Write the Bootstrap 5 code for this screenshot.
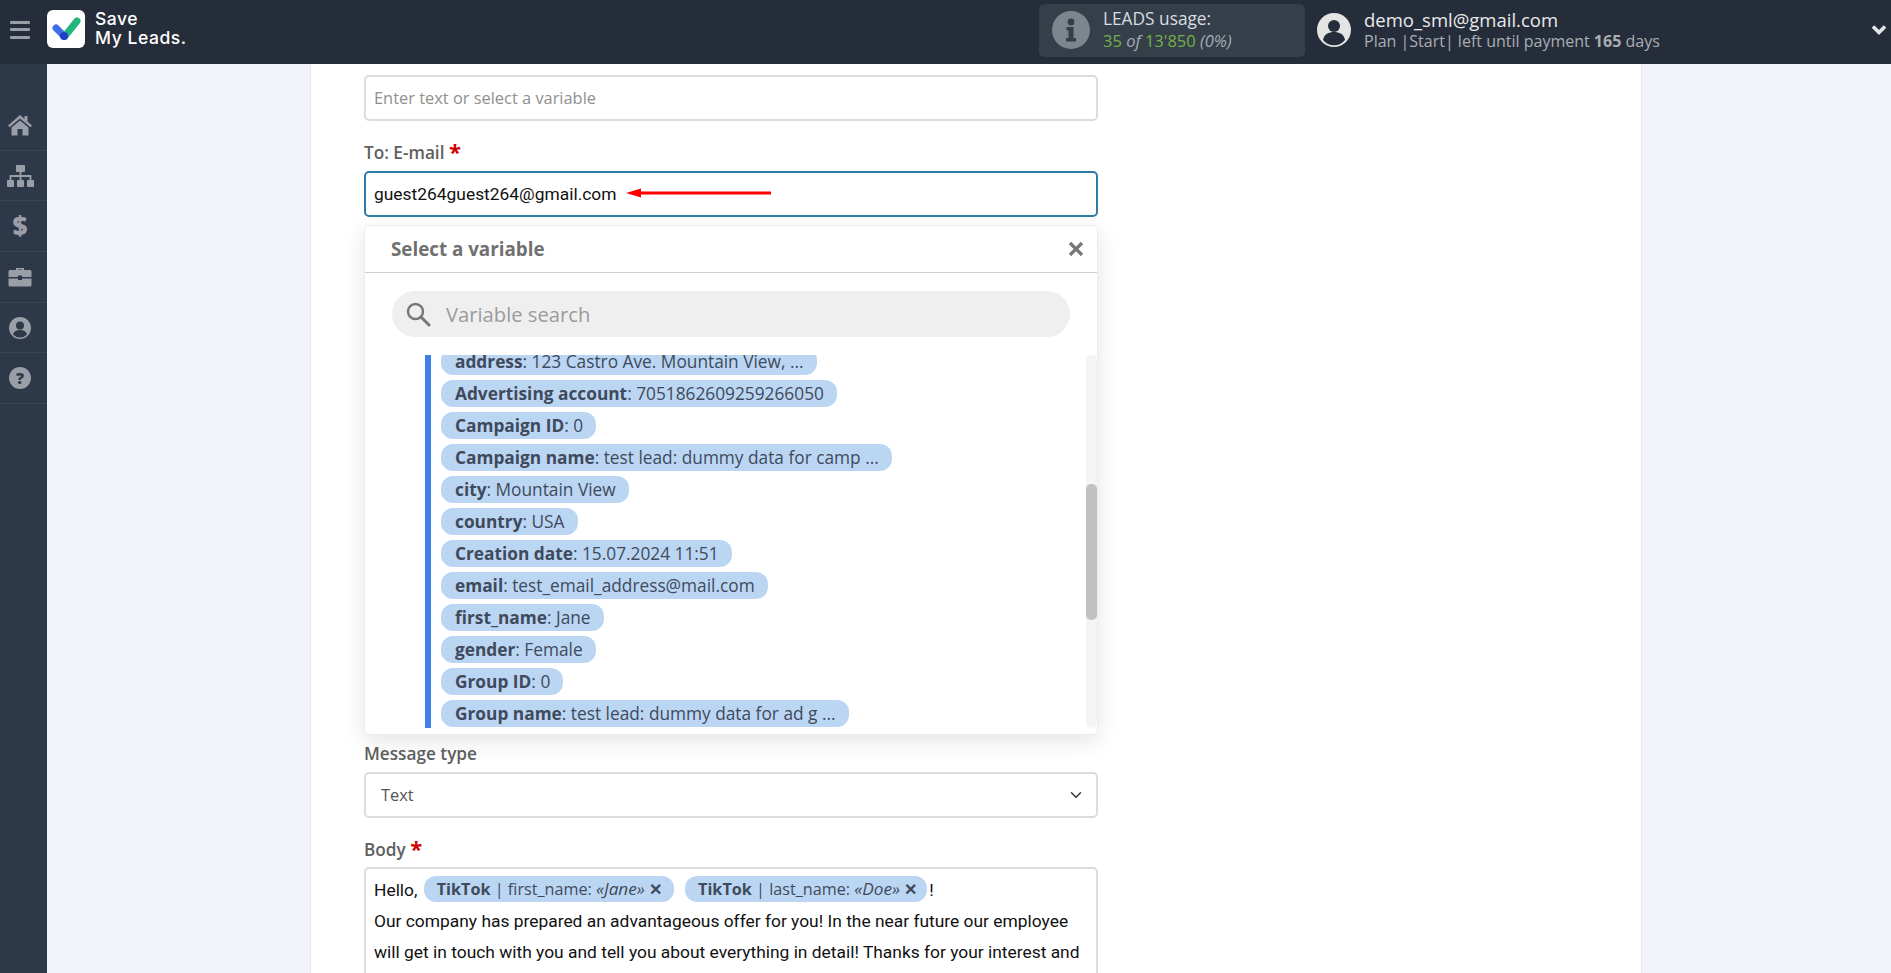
<!DOCTYPE html>
<html lang="en">
<head>
<meta charset="utf-8">
<title>Save My Leads</title>
<link href="https://cdn.jsdelivr.net/npm/bootstrap@5.3.0/dist/css/bootstrap.min.css" rel="stylesheet">
<style>
html,body{height:100%;overflow:hidden}
body{font-family:"Open Sans",sans-serif;background:#f2f4fc;color:#555}
.topbar{height:64px;background:#262d3a;flex:none;padding-bottom:4px}
.burger{width:47px;padding-left:10px;flex:none}
.logo-name{font-family:Inter,sans-serif;font-weight:500;font-size:17.5px;line-height:19.5px;color:#fff;letter-spacing:.55px;margin:0 0 4px 10px}
.logo-box{width:38px;height:38px;background:#fff;border-radius:6px;margin-bottom:3px;flex:none}
.usage{width:266px;height:53px;background:#343f4a;border-radius:5px;color:#d9dce0;font-size:17.300px;line-height:22px;padding-left:13px;flex:none;gap:13px}
.usage-sub{font-size:16.500px}
.usage-green{color:#74b04a}
.usage-muted{color:#a5abb1;font-style:italic}
.user-ico{margin-left:12px;flex:none}
.user-box{width:507px;flex:none;margin-left:13px}
.user-mail{font-size:18.500px;line-height:22px;color:#e9e9e9}
.user-plan{font-size:16px;line-height:20px;color:#a9adb3}
.sidenav{width:47px;background:#2d3848;padding-top:36px;flex:none}
.side-item{height:50.700px;border-bottom:1px solid #3a4656;padding-right:7px}
.panel{margin-left:263px;width:1332px;background:#fff;border-left:1px solid #e8e9f0;border-right:1px solid #e8e9f0;padding:11px 0 0 53px;overflow:hidden}
.form-col{width:734px}
.fld{height:46px;border:2.5px solid #dcdcdc;border-radius:5px;font-size:16.400px;font-family:"Open Sans",sans-serif;color:#555;padding:0 8px 2px;box-shadow:none}
.fld::placeholder{color:#8f8f8f}
.fld-focus,.fld-focus:focus{border-color:#2d7dab;color:#111;font-family:Roboto,sans-serif;font-size:17.400px;box-shadow:none;padding-bottom:0}
.lbl{font-weight:600;font-size:17.200px;line-height:22px;color:#606060;margin:0}
.gap-a{margin-top:21px;margin-bottom:7px}
.gap-b{margin-top:8px;margin-bottom:7px}
.gap-c{margin-top:21px;margin-bottom:6px}
.req{color:#c00;font-size:22px;line-height:16px;font-weight:700;vertical-align:-1px}
.arrow-over{position:absolute;left:262px;top:17px}
.picker{height:510px;margin-top:8px;background:#fff;border:1px solid #ececec;border-radius:5px;box-shadow:0 6px 22px rgba(0,0,0,.11);position:relative}
.picker-head{height:47px;border-bottom:1.5px solid #cfcfcf;padding:0 13px 0 26px}
.picker-title{font-weight:700;font-size:18.800px;color:#707070}
.search-pill{height:46px;margin:18px 27px 0 27px;background:#efefef;border-radius:23px;padding-left:13px;font-size:20.200px;color:#9b9b9b;gap:15px}
.scroll-zone{height:373px;margin:18px 0 0 60px}
.var-list{border-left:6px solid #3d80ea;overflow:hidden;padding-left:10px}
.var-inner{margin-top:-7px}
.var-pill{height:27px;line-height:27px;margin-bottom:5px;padding:0 13px 0 14px;background:#bbd6f3;border-radius:12px;color:#3f4a5c;font-size:17.300px;white-space:nowrap;width:fit-content}
.var-pill b{font-weight:700}
.track{width:11px;background:#f5f5f5;border-radius:5px;flex:none}
.thumb{height:136px;margin-top:129px;background:#c1c1c1;border-radius:5px}
.sel,.sel:focus{height:46px;font-size:16.400px;color:#555;padding-left:15px;padding-bottom:0}
.body-box{height:140px;border:2.5px solid #dcdcdc;border-radius:5px;padding:6px 8px;font-family:Roboto,sans-serif;font-size:17.400px;line-height:31px;color:#111}
.tag{display:inline-block;height:26px;line-height:26px;padding:0 12px 0 13px;margin:0 9px 0 2px;background:#bbd6f3;border-radius:12px;color:#3f4a5c;font-family:"Open Sans",sans-serif;font-size:16.200px;vertical-align:1px}
.tag-last{margin-right:2px;padding-right:10px}
.tag b{font-weight:700}
.tag i{font-size:17.200px}
</style>
</head>
<body class="d-flex flex-column">
<header class="topbar d-flex align-items-center">
  <div class="burger d-flex">
    <svg width="20" height="18" viewBox="0 0 20 18"><g fill="#9a9ea6"><rect y="0" width="20" height="3" rx="1"/><rect y="7" width="20" height="3" rx="1"/><rect y="15" width="20" height="3" rx="1"/></g></svg>
  </div>
  <div class="logo-box d-flex align-items-center justify-content-center">
    <svg width="30" height="24" viewBox="0 0 30 24"><path d="M14 19L26 4" stroke="#23b67c" stroke-width="7" stroke-linecap="round"/><path d="M5 11L13 19" stroke="#3f6fe8" stroke-width="7" stroke-linecap="round"/><circle cx="13" cy="19" r="4" fill="#1f3fc4"/></svg>
  </div>
  <div class="logo-name flex-grow-1">Save<br>My Leads.</div>
  <div class="usage d-flex align-items-center">
    <svg width="38" height="38" viewBox="0 0 38 38"><circle cx="19" cy="19" r="19" fill="#7d858d"/><circle cx="19" cy="11" r="3.4" fill="#343f4a"/><path d="M14.5 16h7v11h2.5v3.5H14V27h2.5v-7.500h-2z" fill="#343f4a"/></svg>
    <div><div>LEADS usage:</div><div class="usage-sub"><span class="usage-green">35</span> <span class="usage-muted">of</span> <span class="usage-green">13'850</span> <span class="usage-muted">(0%)</span></div></div>
  </div>
  <svg width="34" height="34" viewBox="0 0 34 34" class="user-ico"><circle cx="17" cy="17" r="17" fill="#e4e4e4"/><circle cx="17" cy="13" r="6" fill="#262d3a"/><path d="M6 27c1-6 6-8 11-8s10 2 11 8a14 14 0 0 1-22 0z" fill="#262d3a"/></svg>
  <div class="user-box">
    <div class="user-mail">demo_sml@gmail.com</div>
    <div class="user-plan">Plan |Start| left until payment <b>165</b> days</div>
  </div>
  <svg width="16" height="12" viewBox="0 0 16 12" class="me-1"><path d="M2 2.500L8 8.500L14 2.500" fill="none" stroke="#e6e6e6" stroke-width="3.600"/></svg>
</header>
<div class="d-flex flex-grow-1 overflow-hidden">
  <nav class="sidenav">
    <div class="side-item d-flex align-items-center justify-content-center">
      <svg width="26" height="22" viewBox="0 0 26 22"><path d="M13 1L1 11.500l1.500 1.800L13 4.500l10.500 8.800 1.500-1.800L20.500 7.600V2h-3v3zM13 6.500L4.500 13.500V21.500H10.500V15h5v6.500H21.500V13.500z" fill="#9a9fa7"/></svg>
    </div>
    <div class="side-item d-flex align-items-center justify-content-center">
      <svg width="29" height="24" viewBox="0 0 29 24"><g fill="#9a9fa7"><rect x="10" y="1" width="9" height="7" rx="1"/><rect x="1" y="16" width="7" height="7" rx="1"/><rect x="11" y="16" width="7" height="7" rx="1"/><rect x="21" y="16" width="7" height="7" rx="1"/></g><path d="M14.500 8v8M4.500 16v-4h20v4" fill="none" stroke="#9a9fa7" stroke-width="1.800"/></svg>
    </div>
    <div class="side-item d-flex align-items-center justify-content-center">
      <svg width="24" height="36" viewBox="0 0 24 36"><text x="12" y="27" text-anchor="middle" font-family="Open Sans" font-weight="800" font-size="26" fill="#9a9fa7">$</text></svg>
    </div>
    <div class="side-item d-flex align-items-center justify-content-center">
      <svg width="24" height="21" viewBox="0 0 24 21"><path d="M8 4V2h8v2h-2V3.500h-4V4zM2 4h20a1.500 1.500 0 0 1 1.500 1.500V11H14v-1.500h-4V11H.5V5.500A1.500 1.500 0 0 1 2 4zM.5 12.500H10V14h4v-1.500h9.500V19a1.500 1.500 0 0 1-1.500 1.500H2A1.500 1.500 0 0 1 .5 19z" fill="#9a9fa7"/></svg>
    </div>
    <div class="side-item d-flex align-items-center justify-content-center">
      <svg width="22" height="22" viewBox="0 0 22 22"><circle cx="11" cy="11" r="11" fill="#9a9fa7"/><circle cx="11" cy="8.500" r="4" fill="#2d3848"/><path d="M4 17.500c1-3.500 4-4.500 7-4.500s6 1 7 4.500a9.500 9.500 0 0 1-14 0z" fill="#2d3848"/></svg>
    </div>
    <div class="side-item d-flex align-items-center justify-content-center">
      <svg width="22" height="22" viewBox="0 0 22 22"><circle cx="11" cy="11" r="11" fill="#9a9fa7"/><text x="11" y="17" text-anchor="middle" font-family="Open Sans" font-weight="800" font-size="16" fill="#2d3848">?</text></svg>
    </div>
  </nav>
  <main class="panel">
    <div class="form-col">
      <input class="form-control fld" placeholder="Enter text or select a variable">
      <div class="lbl gap-a">To: E-mail <span class="req">*</span></div>
      <div class="position-relative">
        <input class="form-control fld fld-focus" value="guest264guest264@gmail.com">
        <svg class="arrow-over" width="146" height="10" viewBox="0 0 146 10"><path d="M0 5L15 .5V3.500H145V6.500H15V9.500z" fill="#f00"/></svg>
      </div>
      <section class="picker">
        <div class="picker-head d-flex align-items-center justify-content-between">
          <span class="picker-title">Select a variable</span>
          <svg width="16" height="16" viewBox="0 0 16 16"><path d="M2 2L14 14M14 2L2 14" stroke="#777" stroke-width="3.200"/></svg>
        </div>
        <div class="search-pill d-flex align-items-center">
          <svg width="26" height="26" viewBox="0 0 26 26"><circle cx="10.500" cy="10.500" r="7.500" fill="none" stroke="#777" stroke-width="2.400"/><path d="M16 16L24 24" stroke="#777" stroke-width="3" stroke-linecap="round"/></svg>
          <span>Variable search</span>
        </div>
        <div class="scroll-zone d-flex">
          <div class="var-list flex-grow-1">
            <div class="var-inner">
              <div class="var-pill"><b>address</b>: 123 Castro Ave. Mountain View, ...</div>
              <div class="var-pill"><b>Advertising account</b>: 7051862609259266050</div>
              <div class="var-pill"><b>Campaign ID</b>: 0</div>
              <div class="var-pill"><b>Campaign name</b>: test lead: dummy data for camp ...</div>
              <div class="var-pill"><b>city</b>: Mountain View</div>
              <div class="var-pill"><b>country</b>: USA</div>
              <div class="var-pill"><b>Creation date</b>: 15.07.2024 11:51</div>
              <div class="var-pill"><b>email</b>: test_email_address@mail.com</div>
              <div class="var-pill"><b>first_name</b>: Jane</div>
              <div class="var-pill"><b>gender</b>: Female</div>
              <div class="var-pill"><b>Group ID</b>: 0</div>
              <div class="var-pill"><b>Group name</b>: test lead: dummy data for ad g ...</div>
            </div>
          </div>
          <div class="track"><div class="thumb"></div></div>
        </div>
      </section>
      <div class="lbl gap-b">Message type</div>
      <select class="form-select fld sel"><option>Text</option></select>
      <div class="lbl gap-c">Body <span class="req">*</span></div>
      <div class="body-box">Hello, <span class="tag"><b>TikTok</b> | first_name: <i>«Jane»</i> <b>✕</b></span><span class="tag tag-last"><b>TikTok</b> | last_name: <i>«Doe»</i> <b>✕</b></span>!<br>Our company has prepared an advantageous offer for you! In the near future our employee will get in touch with you and tell you about everything in detail! Thanks for your interest and</div>
    </div>
  </main>
</div>
<script src="https://cdn.jsdelivr.net/npm/bootstrap@5.3.0/dist/js/bootstrap.bundle.min.js"></script>
</body>
</html>
